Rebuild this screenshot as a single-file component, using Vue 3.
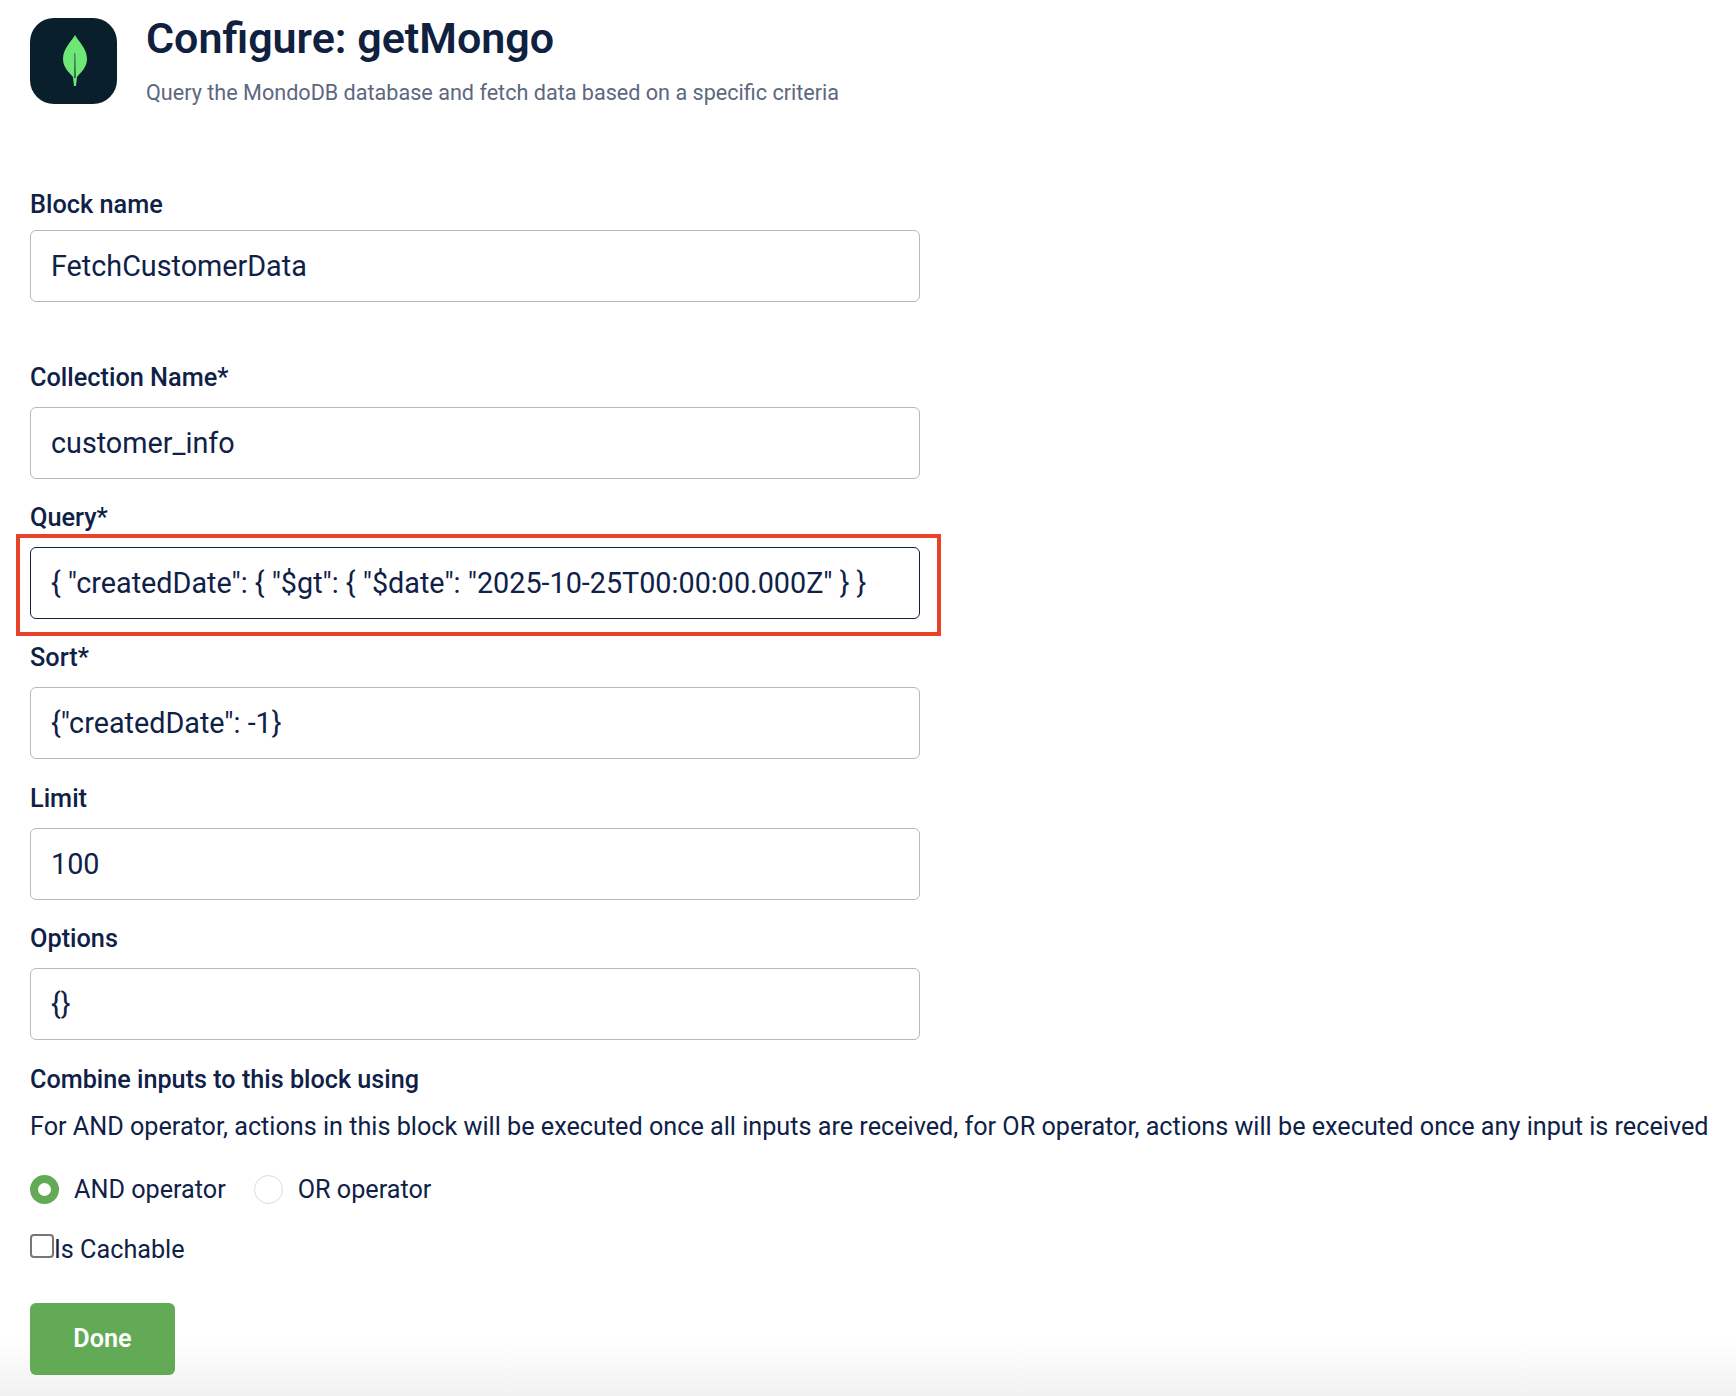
<template>
  <div class="page">
    <header class="head">
      <div class="logo">
        <svg class="leaf" width="26" height="52" viewBox="0 0 26 52">
          <path d="M13 0 C16 6 25 13 25 24 C25 33 18 38 15 42 L14 51 L12 51 L11 42 C8 38 1 33 1 24 C1 13 10 6 13 0 Z" fill="#6ee776" />
          <path d="M12.6 18 L13.2 18 L13.6 43 L12.4 43 Z" fill="#0a2430" />
        </svg>
      </div>
      <div class="head-text">
        <h1>Configure: getMongo</h1>
        <p>Query the MondoDB database and fetch data based on a specific criteria</p>
      </div>
    </header>

    <div v-for="f in fields" :key="f.label" class="field" :class="f.cls">
      <label>{{ f.label }}</label>
      <div class="wrap">
        <div class="input" :class="{ focused: f.focused }">{{ f.value }}</div>
        <div v-if="f.focused" class="highlight"></div>
      </div>
    </div>

    <div class="combine-title">Combine inputs to this block using</div>
    <p class="combine-desc">For AND operator, actions in this block will be executed once all inputs are received, for OR operator, actions will be executed once any input is received</p>

    <div class="radios">
      <span class="radio on"></span><span class="radio-label">AND operator</span>
      <span class="radio"></span><span class="radio-label">OR operator</span>
    </div>

    <div class="cache">
      <span class="check"></span><span>Is Cachable</span>
    </div>

    <button class="done">Done</button>
  </div>
</template>

<script setup>
const fields = [
  { label: 'Block name', value: 'FetchCustomerData', cls: 'f-block' },
  { label: 'Collection Name*', value: 'customer_info' },
  { label: 'Query*', value: '{ "createdDate": { "$gt": { "$date": "2025-10-25T00:00:00.000Z" } }', focused: true },
  { label: 'Sort*', value: '{"createdDate": -1}' },
  { label: 'Limit', value: '100' },
  { label: 'Options', value: '{}' }
]
</script>

<style>
html, body {
  margin: 0;
  background: #fff;
}
</style>

<style scoped>
.page {
  box-sizing: border-box;
  height: 1396px;
  overflow: hidden;
  padding: 18px 0 0 30px;
  font-family: Roboto, "Liberation Sans", sans-serif;
  color: #0f2147;
  background: linear-gradient(to bottom, #fff 1340px, #f1f1f1 1396px);
}

.head {
  display: flex;
  gap: 29px;
  height: 86px;
  margin-bottom: 85px;
}

.logo {
  width: 87px;
  height: 86px;
  border-radius: 24px;
  background: #0a1f2c;
  display: flex;
  align-items: center;
  justify-content: center;
}

.leaf {
  margin-left: 3px;
}

.head-text h1 {
  margin: 0;
  font-size: 43px;
  line-height: 40px;
  font-weight: 600;
  color: #10213f;
}

.head-text p {
  margin: 21px 0 0;
  font-size: 21.6px;
  line-height: 28px;
  color: #5c6880;
}

.field {
  width: 890px;
  margin-bottom: 23.2px;
}

.field label {
  display: block;
  font-size: 25.3px;
  font-weight: 500;
  line-height: 32px;
  margin-bottom: 13px;
}

.f-block {
  margin-bottom: 60px;
}

.f-block label {
  margin-bottom: 9px;
}

.wrap {
  position: relative;
}

.input {
  box-sizing: border-box;
  height: 72px;
  padding: 0 20px;
  border: 1px solid #b4b9c6;
  border-radius: 6px;
  font-size: 28.75px;
  line-height: 70px;
  white-space: nowrap;
}

.input.focused {
  border-color: #0f2147;
}

.highlight {
  position: absolute;
  left: -14px;
  top: -13px;
  width: 925px;
  height: 102px;
  box-sizing: border-box;
  border: 4px solid #e8432a;
}

.combine-title {
  font-size: 25.2px;
  font-weight: 500;
  line-height: 32px;
  padding-top: 1px;
}

.combine-desc {
  margin: 15px 0 0;
  font-size: 25.2px;
  line-height: 32px;
  white-space: nowrap;
}

.radios {
  display: flex;
  align-items: center;
  margin-top: 31px;
  font-size: 25.2px;
  line-height: 32px;
}

.radio {
  box-sizing: border-box;
  width: 29px;
  height: 29px;
  border-radius: 50%;
  border: 1px solid #dcdcdc;
}

.radio.on {
  border: 8px solid #62aa55;
  background: #fff;
}

.radio-label {
  margin: 0 28px 0 15px;
}

.cache {
  display: flex;
  align-items: flex-start;
  margin-top: 28px;
  font-size: 25.2px;
  line-height: 32px;
}

.check {
  box-sizing: border-box;
  width: 24px;
  height: 24px;
  border: 2px solid #767676;
  border-radius: 4px;
  background: #fff;
}

.done {
  display: block;
  width: 145px;
  height: 72px;
  margin-top: 37px;
  border: 0;
  border-radius: 6px;
  background: #62aa55;
  color: #fff;
  font-family: inherit;
  font-size: 25.2px;
  font-weight: 600;
}
</style>
